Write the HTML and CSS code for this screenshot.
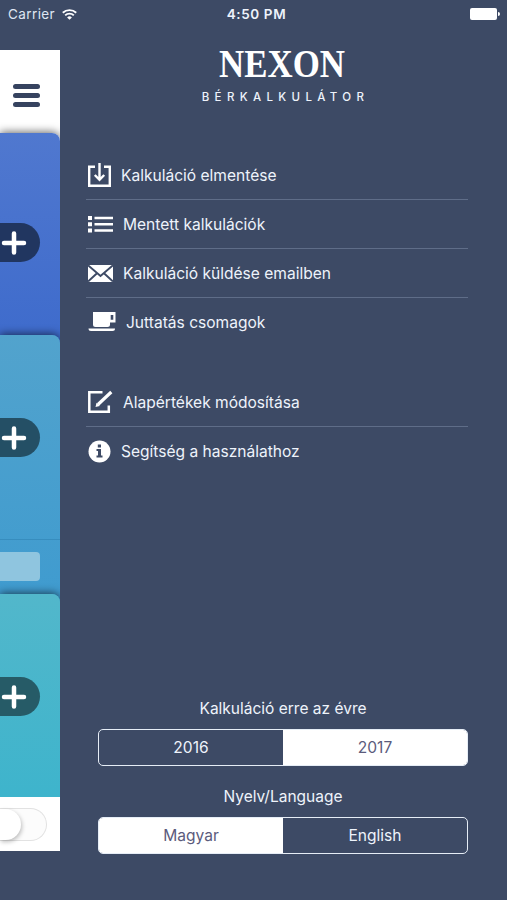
FILE: index.html
```html
<!DOCTYPE html>
<html lang="hu">
<head>
  <meta charset="UTF-8">
  <meta name="viewport" content="width=device-width, initial-scale=1.0">
  <title>Nexon Bérkalkulátor</title>
  <link rel="stylesheet" href="styles.css">
</head>
<body>

  <header class="status">
    <div class="carrier">
      <span>Carrier</span>
      <svg width="15" height="11" viewBox="0 0 15 11" fill="none" stroke="#fff" stroke-width="1.9">
        <path d="M.8 3.8a9.6 9.6 0 0 1 13.4 0M3.2 6.4a6.1 6.1 0 0 1 8.6 0"/>
        <path d="M7.5 10.8L5.1 8.4a3.4 3.4 0 0 1 4.8 0z" fill="#fff" stroke="none"/>
      </svg>
    </div>
    <div class="clock">4:50 PM</div>
    <div class="battery"></div>
  </header>

  <div class="layout">
    <div class="page">
      <div class="page-header">
        <div class="burger"><i></i><i></i><i></i></div>
      </div>
      <div class="card card-blue">
        <div class="plus"><svg width="26" height="26" viewBox="0 0 26 26"><path d="M13 3.500V22.500M3 13H23"/></svg></div>
      </div>
      <div class="card card-sky">
        <div class="plus"><svg width="26" height="26" viewBox="0 0 26 26"><path d="M13 3.500V22.500M3 13H23"/></svg></div>
        <div class="card-footer"><div class="field"></div></div>
      </div>
      <div class="card card-teal">
        <div class="plus"><svg width="26" height="26" viewBox="0 0 26 26"><path d="M13 3.500V22.500M3 13H23"/></svg></div>
      </div>
      <div class="page-footer">
        <div class="switch"><div class="knob"></div></div>
      </div>
    </div>

    <main class="menu">
      <div class="brand">
        <svg class="logo" width="128" height="32" viewBox="0 0 128 32">
          <text x="1" y="29" textLength="126" lengthAdjust="spacingAndGlyphs">NEXON</text>
        </svg>
        <div class="subtitle">BÉRKALKULÁTOR</div>
      </div>

      <ul class="group">
        <li>
          <svg width="23" height="26" viewBox="0 0 23 26" fill="none" stroke="#fff" stroke-width="2.400">
            <path d="M7 4.700H1.200V23.800H21.800V4.700H16"/>
            <path d="M11.500 1V17M6.800 13L11.500 17.800L16.200 13"/>
          </svg>
          <span class="save">Kalkuláció elmentése</span>
        </li>
        <li>
          <svg width="25" height="18" viewBox="0 0 25 18" fill="#fff">
            <path d="M0 1h4v4H0zM0 7.200h4v4H0zM0 13.400h4v4H0zM6.500 1.800H25v2.500H6.500zM6.500 8H25v2.500H6.500zM6.500 14.200H25v2.500H6.500z"/>
          </svg>
          <span class="list">Mentett kalkulációk</span>
        </li>
        <li>
          <svg width="25" height="17" viewBox="0 0 25 17">
            <path d="M0 0H25V17H0z" fill="#fff"/>
            <path d="M0 .3L12.500 11L25 .3M0 16.500L9 8.300M25 16.500L16 8.300" fill="none" stroke="#3d4a65" stroke-width="2"/>
          </svg>
          <span class="mail">Kalkuláció küldése emailben</span>
        </li>
        <li>
          <svg width="28" height="20" viewBox="0 0 28 20" fill="#fff">
            <path d="M5 0H27.500V10.500H22V12.500Q22 15 19.500 15H7.500Q5 15 5 12.500zM22.700 3V7.800H25.300V3z" fill-rule="evenodd"/>
            <path d="M.5 16.500H27Q27 19 24.500 19H3Q.5 19 .5 16.500z"/>
          </svg>
          <span class="cup">Juttatás csomagok</span>
        </li>
      </ul>

      <ul class="group">
        <li>
          <svg width="25" height="24" viewBox="0 0 25 24" fill="none" stroke="#fff">
            <path d="M14.500 2.200H1.300V21.800H20.800V15.500" stroke-width="2.500"/>
            <path d="M10 14.500L23.300 2" stroke-width="3.200"/>
            <path d="M7.500 17L8.500 12.800L11.800 16z" fill="#fff" stroke="none"/>
          </svg>
          <span class="edit">Alapértékek módosítása</span>
        </li>
        <li>
          <svg width="23" height="23" viewBox="0 0 23 23">
            <circle cx="11.500" cy="11.500" r="11" fill="#fff"/>
            <path d="M9.800 4.500H13V7.500H9.800zM8.500 9H13V15.500H14.500V17.500H8.500V15.500H10V11H8.500z" fill="#3d4a65"/>
          </svg>
          <span class="info">Segítség a használathoz</span>
        </li>
      </ul>

      <section class="settings">
        <h2 class="year">Kalkuláció erre az évre</h2>
        <div class="segment">
          <button>2016</button>
          <button class="active">2017</button>
        </div>
        <h2 class="language">Nyelv/Language</h2>
        <div class="segment">
          <button class="active">Magyar</button>
          <button>English</button>
        </div>
      </section>
    </main>
  </div>

</body>
</html>
```
FILE: styles.css
```css
* {
  box-sizing: border-box;
}

body {
  margin: 0;
  height: 900px;
  background: #3d4a65;
  color: #eef3fb;
  font-family: Inter, "Liberation Sans", sans-serif;
  font-size: 15.55px;
  overflow: hidden;
}

svg {
  display: block;
  flex: none;
}

.status {
  display: grid;
  grid-template-columns: 1fr auto 1fr;
  align-items: center;
  height: 28px;
  padding: 0 7px 0 8px;
  font-size: 13px;
}

.carrier {
  display: flex;
  align-items: center;
  gap: 7px;
  font-size: 13.5px;
  letter-spacing: 0.4px;
  color: #dfe6f2;
}

.clock {
  font-size: 13.5px;
  font-weight: 600;
  letter-spacing: 0.6px;
  padding-left: 5px;
}

.battery {
  position: relative;
  justify-self: end;
  width: 27px;
  height: 12px;
  margin-right: 3px;
  background: #fff;
  border-radius: 2px;
}

.battery::after {
  content: "";
  position: absolute;
  top: 4px;
  right: -3px;
  width: 2px;
  height: 4px;
  background: #fff;
  border-radius: 0 2px 2px 0;
}

.layout {
  display: flex;
  height: 872px;
}

/* visible strip of the page pushed aside by the menu */
.page {
  width: 60px;
  height: 801px;
  margin-top: 22px;
  background: #fff;
  overflow: hidden;
}

.page-header {
  height: 83px;
  padding: 34px 0 0 13px;
}

.burger {
  display: flex;
  flex-direction: column;
  gap: 4px;
  width: 27px;
}

.burger i {
  height: 5px;
  background: #36435f;
  border-radius: 3px;
}

.card {
  position: relative;
  margin-bottom: -10px;
  padding-top: 83px;
  border-radius: 0 8px 0 0;
  box-shadow: 0 -1px 8px rgba(0, 0, 0, 0.6);
}

.card-blue {
  height: 212px;
  padding-top: 90px;
  background: linear-gradient(#5078cf, #3e6bcc);
}

.card-sky {
  height: 269px;
  background: linear-gradient(#52a3cd, #3f9bcf);
}

.card-teal {
  height: 203px;
  margin-bottom: 0;
  background: linear-gradient(#52b7cb, #3eb4cc);
}

.plus {
  display: flex;
  align-items: center;
  width: 40px;
  height: 39px;
  padding-left: 1px;
  background: #213660;
  border-radius: 0 20px 20px 0;
}

.plus path {
  stroke: #fff;
  stroke-width: 4.5;
  stroke-linecap: round;
}

.card-sky .plus {
  background: #244f65;
}

.card-teal .plus {
  background: #265b67;
}

.card-footer {
  margin-top: 82px;
  padding-top: 12px;
  border-top: 1px solid #378dbe;
}

.field {
  width: 40px;
  height: 29px;
  background: #8fc5df;
  border-radius: 0 4px 4px 0;
}

.page-footer {
  position: relative;
  height: 54px;
  padding-top: 11px;
  background: #fff;
}

.switch {
  width: 47px;
  height: 33px;
  border: 1px solid #e2e2e2;
  border-left: 0;
  border-radius: 0 17px 17px 0;
  background: #fcfcfc;
}

.knob {
  width: 21px;
  height: 31px;
  background: #fff;
  border-radius: 0 16px 16px 0;
  box-shadow: 1px 2px 4px rgba(0, 0, 0, 0.25);
}

.menu {
  display: flex;
  flex-direction: column;
  flex: 1;
  padding: 20px 39px 0 26px;
}

.brand {
  display: flex;
  flex-direction: column;
  align-items: center;
  height: 103px;
  padding-left: 10px;
}

.logo {
  overflow: visible;
}

.logo text {
  fill: #fff;
  font-family: "Liberation Serif", serif;
  font-size: 41px;
  font-weight: bold;
}

.subtitle {
  margin: 9px -7px 0 0;
  font-size: 11.5px;
  font-weight: 500;
  line-height: 16px;
  letter-spacing: 5.35px;
}

.group {
  list-style: none;
  margin: 0 0 31px;
  padding: 0;
}

.group li {
  display: flex;
  align-items: center;
  gap: 10px;
  height: 49px;
  padding-left: 2px;
  border-bottom: 1px solid #5f6d88;
}

.group li:last-child {
  border-bottom-color: transparent;
}

.settings {
  margin-top: 192px;
  padding-left: 12px;
}

.settings h2 {
  margin: 0 0 10px;
  font-size: 15.5px;
  font-weight: normal;
  line-height: 20px;
  text-align: center;
}

.segment {
  display: grid;
  grid-template-columns: 1fr 1fr;
  height: 37px;
  margin-bottom: 21px;
  border: 1.5px solid #e6edf6;
  border-radius: 5px;
  overflow: hidden;
}

.segment button {
  padding: 0;
  border: 0;
  background: none;
  color: #eef3fb;
  font: inherit;
}

.segment .active {
  background: #fff;
  color: #5b5b7c;
}
```
